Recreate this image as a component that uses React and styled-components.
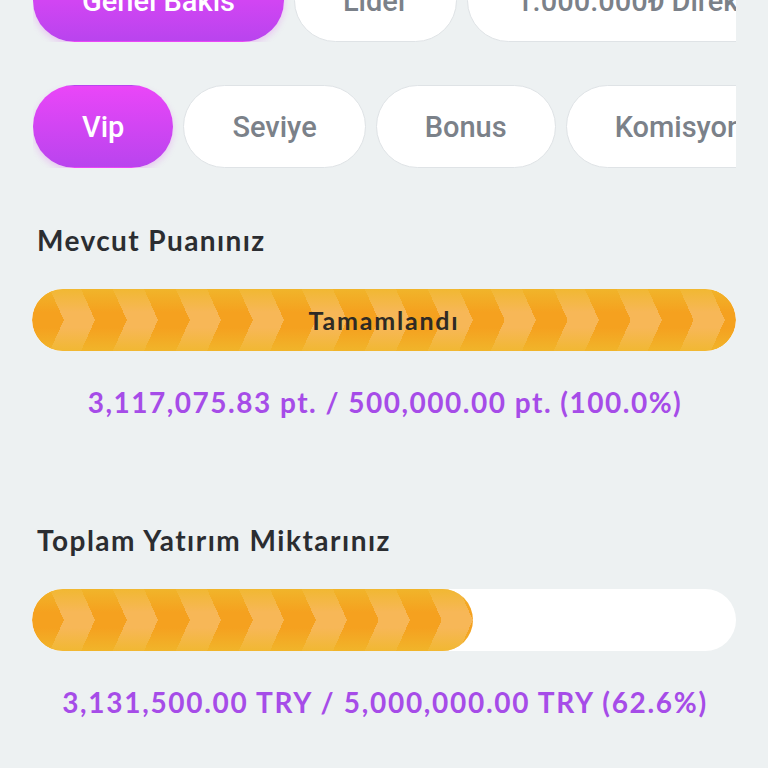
import React from 'react';
import styled, { createGlobalStyle } from 'styled-components';

const GlobalStyle = createGlobalStyle`
    body {
        margin: 0;
        background: #edf1f2;
        font-family: "Lato", "Noto Sans", sans-serif;
    }
`

const Page = styled.div`
    padding: 0 32px 0 33px;
    margin-top: -41px;
    height: 768px;
    box-sizing: border-box;
`

const TabGroup = styled.div`
    display: flex;
    flex-direction: column;
    gap: 43px;
`

const TabRow = styled.div`
    display: flex;
    gap: 10px;
    overflow: hidden;
    width: 703px;
`

const Tab = styled.div`
    flex: none;
    height: 83px;
    box-sizing: border-box;
    padding: 0 48px;
    border-radius: 42px;
    display: flex;
    align-items: center;
    justify-content: center;
    font-family: "Roboto", "DejaVu Sans", sans-serif;
    font-size: 29px;
    font-weight: 500;
    white-space: nowrap;
    color: ${p => p.$active ? '#fff' : '#7b8189'};
    border: 1px solid ${p => p.$active ? 'transparent' : '#dfe3e6'};
    background: ${p => p.$active ? 'linear-gradient(180deg, #ea46f8 0%, #b944ee 100%)' : '#fff'};
    box-shadow: ${p => p.$active ? '0 3px 6px rgba(220, 70, 240, 0.25)' : 'none'};
`

const Heading = styled.h2`
    margin: ${p => p.$top}px 0 0 4px;
    font-size: 28px;
    line-height: 32px;
    font-weight: 700;
    letter-spacing: ${p => p.$spacing || 1.4}px;
    color: #2b2d31;
`

const Bar = styled.div`
    display: grid;
    height: 62px;
    width: 704px;
    margin: 33px 0 0 -1px;
    border-radius: 31px;
    background: #fff;
    overflow: hidden;

    > * {
        grid-area: 1 / 1;
    }
`

const stripes = (angle) => `repeating-linear-gradient(${angle}deg, #f5a11f 0px, #f5a11f 29px, #f7b757 29px, #f7b757 57.4px)`

const Fill = styled.div`
    height: 62px;
    border-radius: 31px;
    overflow: hidden;
    display: flex;
    flex-direction: column;

    &::before, &::after {
        content: '';
        flex: 1;
    }

    &::before {
        background:
            linear-gradient(180deg, rgba(240, 184, 44, 0.85) 0%, rgba(240, 184, 44, 0) 75%),
            ${stripes(65.7)};
    }

    &::after {
        background:
            linear-gradient(0deg, rgba(240, 184, 44, 0.85) 0%, rgba(240, 184, 44, 0) 75%),
            ${stripes(114.3)};
    }
`

const BarLabel = styled.div`
    align-self: center;
    justify-self: center;
    font-size: 25px;
    font-weight: 700;
    letter-spacing: 1.8px;
    color: #2f2a24;
`

const Value = styled.div`
    margin-top: 35px;
    text-align: center;
    font-size: 28px;
    line-height: 32px;
    font-weight: 700;
    letter-spacing: ${p => p.$spacing || 1.5}px;
    color: #a64ce8;
    width: 704px;
`

const ProgressBar = ({ percent, label }) => (
    <Bar>
        <Fill style={{ width: `${percent}%` }} />
        {label && <BarLabel>{label}</BarLabel>}
    </Bar>
)

const App = () => {
    const topTabs = ['Genel Bakis', 'Lider', '1.000.000₺ Direkt']
    const subTabs = ['Vip', 'Seviye', 'Bonus', 'Komisyon']

    return (
        <>
            <GlobalStyle />
            <Page>
                <TabGroup>
                    <TabRow>
                        {topTabs.map((t, i) => <Tab key={t} $active={i === 0}>{t}</Tab>)}
                    </TabRow>
                    <TabRow>
                        {subTabs.map((t, i) => <Tab key={t} $active={i === 0}>{t}</Tab>)}
                    </TabRow>
                </TabGroup>

                <Heading $top={56}>Mevcut Puanınız</Heading>
                <ProgressBar percent={100} label="Tamamlandı" />
                <Value>3,117,075.83 pt. / 500,000.00 pt. (100.0%)</Value>

                <Heading $top={106} $spacing={1.5}>Toplam Yatırım Miktarınız</Heading>
                <ProgressBar percent={62.6} />
                <Value $spacing={1.7}>3,131,500.00 TRY / 5,000,000.00 TRY (62.6%)</Value>
            </Page>
        </>
    )
}

export default App;
